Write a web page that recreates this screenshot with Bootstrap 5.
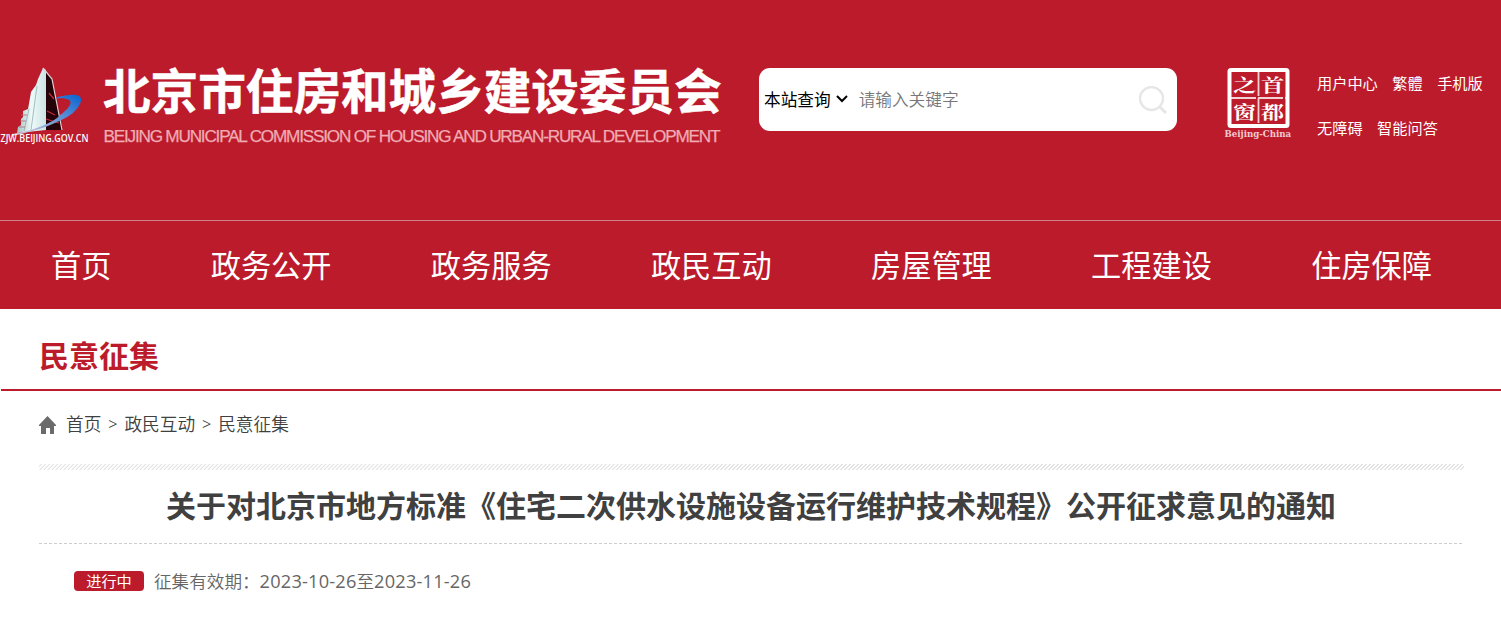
<!DOCTYPE html>
<html lang="zh-CN">
<head>
<meta charset="utf-8">
<meta name="viewport" content="width=device-width, initial-scale=1">
<title>民意征集</title>
<link href="https://cdn.jsdelivr.net/npm/bootstrap@5.3.0/dist/css/bootstrap.min.css" rel="stylesheet">
<style>
body{font-family:"Noto Sans CJK SC",sans-serif;color:#404040;overflow:hidden}
a{text-decoration:none;color:inherit}
.red{background:#bc1b2c}
.masthead{height:220px;padding-top:65px}
.emblem{width:103px;height:82px;flex:none}
.site-name{width:619px;margin-top:-1px}
.site-name h1{font-size:47.6px;line-height:50px;font-weight:700;margin:0;-webkit-text-stroke:.5px #fff}
.site-name svg{display:block;margin-top:9px}
.search{width:418px;height:63px;border-radius:11px;margin:3px 0 0 37px;padding:0 9px 2px 5px}
.search button,.search input{font-size:16.67px;line-height:24px}
.search button{color:#000}
.search input{margin-left:10px}
.search input::placeholder{color:#777;opacity:1;font-weight:350}
.seal{width:70px;height:76px;margin:1px 0 0 47px}
.tools{margin:6px 0 0 23px;font-size:15.2px;line-height:22px}
.tools div{gap:14.5px}
.tools div+div{margin-top:23px}
.mainnav{height:89px;border-top:1px solid #cf8188;padding:0 69px 1px 51px;font-size:30.2px}
.heading{height:82px;margin-left:1px;padding:18px 0 0 38px;border-bottom:2px solid #bc1b2c;color:#bc1b2c}
.heading h2{font-size:30px;line-height:54px;font-weight:700;margin:0}
.crumbs{height:73px;padding:19px 0 0 38px;font-size:17.7px;line-height:27px;font-weight:350}
.crumbs svg{margin:6px 9px 0 1px}
.crumbs i{font-style:normal;font-family:"Noto Sans",sans-serif;font-size:16px;line-height:29px;width:23px;text-align:center}
.article{margin:0 37px 0 39px}
.hatch{height:6px;background:repeating-linear-gradient(135deg,#fff 0 1.2px,#e4e4e4 1.6px 2.5px,#fff 2.83px)}
.article h3{font-size:30px;line-height:45px;height:73px;padding-top:12px;font-weight:700;margin:0 1px 0 0;text-align:center;white-space:nowrap}
.dash{height:1px;background:repeating-linear-gradient(90deg,#ccc 0 3px,#fff 3px 5px)}
.period{padding:23px 0 0 35px;font-size:17.6px;line-height:27px;color:#666;font-weight:350}
.state{width:70px;height:20px;border-radius:4px;font-size:15.2px;line-height:19px;margin-right:10px;color:#fff;text-align:center;font-weight:400}
.num{font-family:"Open Sans","Noto Sans",sans-serif;font-weight:400;font-size:18.2px;letter-spacing:.2px}
</style>
</head>
<body>
<header class="red text-white">
  <div class="masthead d-flex align-items-start">
    <svg class="emblem" viewBox="0 0 103 82">
      <defs>
        <linearGradient id="orbit" x1="0" y1="1" x2="1" y2="0"><stop offset="0" stop-color="#e5cedb"/><stop offset=".4" stop-color="#86a5d6"/><stop offset="1" stop-color="#0763d2"/></linearGradient>
        <linearGradient id="wall"><stop offset="0" stop-color="#a4c2c2"/><stop offset=".5" stop-color="#eefafa"/><stop offset="1" stop-color="#cce3e3"/></linearGradient>
      </defs>
      <path d="M43 3 52 14 62 65H45Z" fill="#240408"/>
      <path d="M43 3 38 14 36 20 31 27 28 44 23 46 23 52 21 54 21 60 18 62 17 68 46 65 46 5Z" fill="url(#wall)"/>
      <path d="M37 21 31 65M29 44 24 66" stroke="#86a5a7" stroke-width=".7" fill="none"/>
      <path d="M21 50h6M20 56h6M19 62h6" stroke="#b46470" stroke-width=".8"/>
      <path d="M43 3 52 14 62 65" stroke="#dfd3d4" stroke-width="1.200" fill="none"/>
      <path d="M49 28 54 34M47 46 55 50M46 54 59 58" stroke="#c32a3a" stroke-width="1.300"/>
      <path d="M56 32.500C84 25 87 34 73 48 60 58 36 66 12 71L12 69C28 67 46 61 57 53 70 43 80 32 56 33.500" fill="url(#orbit)"/>
      <text x="0.500" y="77" font-family="Open Sans, sans-serif" font-size="10.800" font-weight="600" fill="#fff" textLength="88" lengthAdjust="spacingAndGlyphs">ZJW.BEIJING.GOV.CN</text>
    </svg>
    <div class="site-name flex-shrink-0">
      <h1 class="text-nowrap">北京市住房和城乡建设委员会</h1>
      <svg width="619" height="24"><text x="0.500" y="18.500" font-family="Liberation Sans, sans-serif" font-size="17.200" fill="#efacb3" stroke="#efacb3" stroke-width=".25" textLength="617" lengthAdjust="spacing">BEIJING MUNICIPAL COMMISSION OF HOUSING AND URBAN-RURAL DEVELOPMENT</text></svg>
    </div>
    <form class="search bg-white d-flex align-items-center flex-shrink-0">
      <button type="button" class="btn p-0 border-0 d-flex align-items-center text-nowrap">本站查询
        <svg class="ms-1" width="14" height="10" viewBox="0 0 14 10"><path d="m2 2 5 5 5-5" fill="none" stroke="#000" stroke-width="2"/></svg></button>
      <input class="form-control border-0 p-0 bg-transparent" placeholder="请输入关键字" aria-label="关键字">
      <svg class="flex-shrink-0 mt-1" width="30" height="30" viewBox="0 0 30 30" fill="none" stroke="#e6e6e6" stroke-width="2.300"><circle cx="13.500" cy="12.500" r="11.500"/><path d="m22 21 6 6" stroke-width="3"/></svg>
    </form>
    <svg class="seal flex-shrink-0" viewBox="0 0 70 76">
      <rect x="5.500" y="4" width="58" height="56" rx="1.500" fill="none" stroke="#fff" stroke-width="4"/>
      <path d="M34.500 5v54M7 32h55" stroke="#fff" stroke-opacity=".8" stroke-width="1.800" stroke-dasharray="25 2"/>
      <g fill="#fff" font-family="Noto Serif CJK SC, Noto Sans CJK SC, serif" font-size="21" font-weight="700" text-anchor="middle"><text transform="translate(20.500 25.500) scale(1.1 .85)">之</text><text transform="translate(48.500 25.500) scale(1.1 .85)">首</text><text transform="translate(20.500 52.500) scale(1.1 .85)">窗</text><text transform="translate(48.500 52.500) scale(1.1 .85)">都</text></g>
      <text x="0.500" y="70.500" font-family="DejaVu Serif, serif" font-size="8.500" font-weight="700" fill="#f4cbd0" textLength="66.500" lengthAdjust="spacingAndGlyphs">Beijing-China</text>
    </svg>
    <nav class="tools flex-shrink-0 text-nowrap">
      <div class="d-flex"><a href="#">用户中心</a><a href="#">繁體</a><a href="#">手机版</a></div>
      <div class="d-flex"><a href="#">无障碍</a><a href="#">智能问答</a></div>
    </nav>
  </div>
  <nav class="mainnav d-flex justify-content-between align-items-center text-nowrap">
    <a href="#">首页</a><a href="#">政务公开</a><a href="#">政务服务</a><a href="#">政民互动</a><a href="#">房屋管理</a><a href="#">工程建设</a><a href="#">住房保障</a>
  </nav>
</header>
<main>
  <div class="heading"><h2>民意征集</h2></div>
  <nav class="crumbs d-flex">
    <svg width="18" height="18" viewBox="0 0 18 18"><path d="M8.500 0 17 9v1h-2v8h-4v-6H7v6H2v-8H0V9Z" fill="#6b6b6b"/></svg>
    <a href="#">首页</a><i>&gt;</i><a href="#">政民互动</a><i>&gt;</i><a href="#">民意征集</a>
  </nav>
  <article class="article">
    <div class="hatch"></div>
    <h3>关于对北京市地方标准《住宅二次供水设施设备运行维护技术规程》公开征求意见的通知</h3>
    <div class="dash"></div>
    <div class="period d-flex align-items-center"><span class="state red">进行中</span><span>征集有效期：<span class="num">2023-10-26</span>至<span class="num">2023-11-26</span></span></div>
  </article>
</main>
<script src="https://cdn.jsdelivr.net/npm/bootstrap@5.3.0/dist/js/bootstrap.bundle.min.js"></script>
</body>
</html>
